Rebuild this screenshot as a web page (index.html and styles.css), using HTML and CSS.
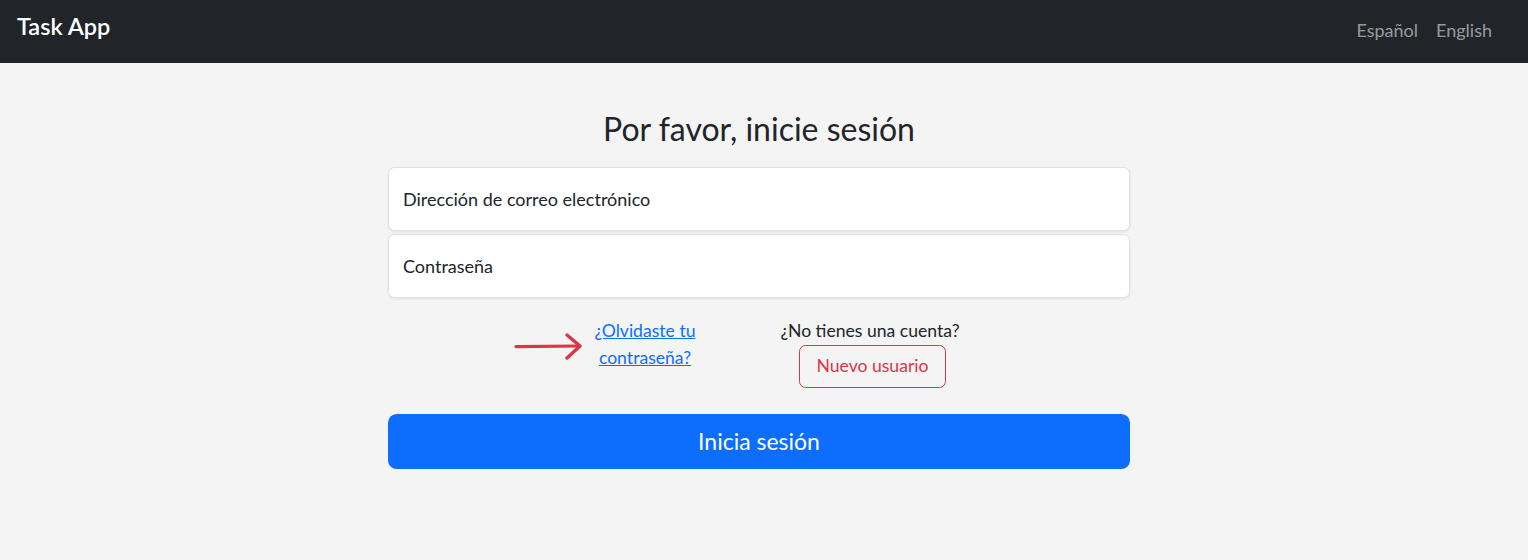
FILE: index.html
```html
<!DOCTYPE html>
<html lang="es">
<head>
<meta charset="utf-8">
<title>Task App</title>
<link rel="stylesheet" href="styles.css">
</head>
<body>
<nav class="navbar">
  <a class="brand" href="#">Task App</a>
  <div class="langs">
    <a class="lang" href="#">Español</a>
    <a class="lang" href="#">English</a>
  </div>
</nav>
<main class="page">
  <div class="signin">
    <h1 class="title">Por favor, inicie sesión</h1>
    <div class="field"><label class="field-label">Dirección de correo electrónico</label></div>
    <div class="field"><label class="field-label">Contraseña</label></div>
    <div class="links">
      <svg class="arrow" width="68" height="28" viewBox="0 0 68 28" aria-hidden="true">
        <path d="M2 14.6 L65 14" fill="none" stroke="#dc3545" stroke-width="3.2" stroke-linecap="round"/>
        <path d="M53 3 L66 14 L53 26" fill="none" stroke="#dc3545" stroke-width="3.4" stroke-linecap="round" stroke-linejoin="round"/>
      </svg>
      <a class="forgot" href="#">¿Olvidaste tu<br>contraseña?</a>
      <div class="signup">
        <span class="signup-text">¿No tienes una cuenta?</span>
        <a class="btn-outline" href="#">Nuevo usuario</a>
      </div>
    </div>
    <button class="submit" type="button">Inicia sesión</button>
  </div>
</main>
</body>
</html>
```
FILE: styles.css
```css
* { box-sizing: border-box; }

body {
  margin: 0;
  background: #f4f4f4;
  color: #212529;
  font-family: Lato, "Noto Sans", sans-serif;
}

.navbar {
  height: 63px;
  background: #212529;
  display: flex;
  justify-content: space-between;
  align-items: flex-start;
  padding: 0 36px 0 17px;
}

.brand {
  margin-top: 10px;
  font-size: 23.5px;
  line-height: 33px;
  font-weight: 600;
  color: #fff;
  text-decoration: none;
}

.langs {
  display: flex;
  gap: 18px;
  margin-top: 17px;
}

.lang {
  font-size: 18px;
  line-height: 26.4px;
  color: rgba(255, 255, 255, 0.55);
  text-decoration: none;
}

.page {
  padding: 47px 10px 0 0;
}

.signin {
  width: 742px;
  margin: 0 auto;
}

.title {
  margin: 0 0 19px;
  font-size: 32px;
  line-height: 38.4px;
  font-weight: 400;
  text-align: center;
}

.field {
  height: 64px;
  background: #fff;
  border: 1px solid #dee2e6;
  border-radius: 6.6px;
  box-shadow: 0 1px 3px rgba(0, 0, 0, 0.08);
  display: flex;
  align-items: center;
  padding-left: 14px;
  margin-bottom: 3px;
}

.field-label {
  font-size: 18px;
  line-height: 26.4px;
  color: #212529;
}

.links {
  margin-top: 20px;
  display: flex;
  align-items: flex-start;
  padding-left: 126px;
  font-size: 17.6px;
  line-height: 26.4px;
}

.arrow {
  margin-top: 14px;
  flex: none;
}

.forgot {
  width: 120px;
  margin-left: 3px;
  text-align: center;
  color: #0d6efd;
  text-decoration: underline;
}

.signup {
  width: 196px;
  margin-left: 67px;
  display: flex;
  flex-direction: column;
  align-items: center;
  white-space: nowrap;
}

.btn-outline {
  display: inline-block;
  height: 43px;
  padding: 7px 16px;
  margin-left: 5px;
  border: 1px solid #dc3545;
  border-radius: 6.6px;
  color: #dc3545;
  text-decoration: none;
}

.submit {
  display: block;
  width: 100%;
  height: 55px;
  margin-top: 26px;
  border: 0;
  border-radius: 8.8px;
  background: #0d6efd;
  color: #fff;
  font-family: inherit;
  font-size: 23px;
}
```
